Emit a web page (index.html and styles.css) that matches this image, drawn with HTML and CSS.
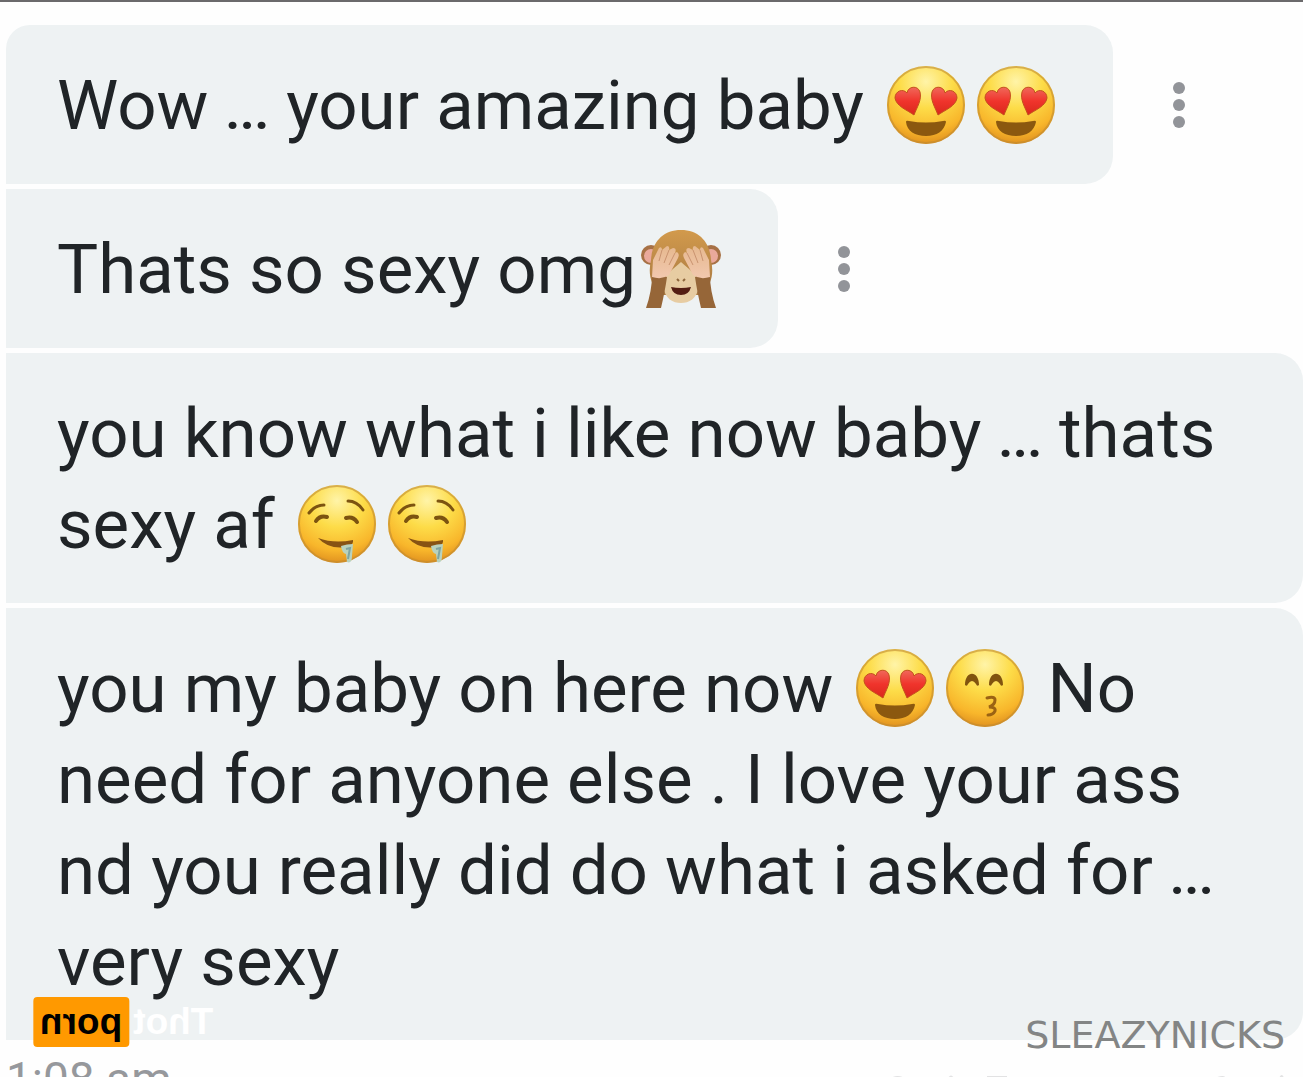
FILE: index.html
```html
<!DOCTYPE html>
<html lang="en">
  <head>
    <meta charset="UTF-8" />
    <meta name="viewport" content="width=device-width, initial-scale=1.0" />
    <title>Messages</title>
    <link rel="stylesheet" href="styles.css">
  </head>

  <body>
    <!-- shared shapes -->
    <svg class="defs" aria-hidden="true">
      <defs>
        <radialGradient id="skin" cx="0.5" cy="0.2" r="0.85">
          <stop offset="0" stop-color="#fff4a8" />
          <stop offset="0.4" stop-color="#fddc48" />
          <stop offset="0.75" stop-color="#f8b62b" />
          <stop offset="1" stop-color="#d9861c" />
        </radialGradient>
        <linearGradient id="heart" x1="0" y1="0" x2="0" y2="1">
          <stop offset="0" stop-color="#f0685a" />
          <stop offset="0.5" stop-color="#f0342c" />
          <stop offset="1" stop-color="#d9281c" />
        </linearGradient>
        <linearGradient id="fur" x1="0" y1="0" x2="0" y2="1">
          <stop offset="0" stop-color="#d29a4c" />
          <stop offset="1" stop-color="#a77842" />
        </linearGradient>
        <linearGradient id="hand" x1="0" y1="0" x2="0" y2="1">
          <stop offset="0" stop-color="#e6b88f" />
          <stop offset="1" stop-color="#f2c8ae" />
        </linearGradient>
        <symbol id="face" viewBox="0 0 80 80">
          <circle cx="40" cy="40" r="39" fill="url(#skin)" />
          <circle cx="40" cy="40" r="38" fill="none" stroke="#c08a30" stroke-opacity="0.6" stroke-width="2" />
        </symbol>
        <symbol id="love" viewBox="0 0 80 80">
          <use href="#face" />
          <g fill="url(#heart)" stroke="#c4501c" stroke-width="1">
            <path d="M28 50C21 45 10 41 9 33C9 26 17 23 21 28C22 21 32 20 34 27C36 35 31 42 28 50Z" />
            <path d="M52 50C49 42 44 35 46 27C48 20 58 21 59 28C63 23 71 26 71 33C70 41 59 45 52 50Z" />
          </g>
          <path d="M20 57Q20 55 23 56Q40 59 57 56Q60 55 60 57C58 66 51 71 40 71S21 66 20 57Z" fill="#8b580f" />
        </symbol>
        <symbol id="drool" viewBox="0 0 80 80">
          <use href="#face" />
          <g fill="none" stroke="#7c5310" stroke-linecap="round">
            <path d="M12 29Q18 21 27 21" stroke-width="3" />
            <path d="M51 17Q60 17 66 26" stroke-width="3" />
            <path d="M19 37Q23 31 30 33" stroke-width="4" />
            <path d="M49 34Q56 32 60 38" stroke-width="4" />
          </g>
          <path d="M21 54Q37 60 56 56Q57 61 50 63Q32 66 21 54Z" fill="#875313" />
          <path d="M44 62Q50 60 56 60L55 72Q55 80 50 78L49 70Q45 69 44 62Z" fill="#b9d2bd" />
          <path d="M49 65L53 64L51 75" fill="none" stroke="#7fa5a0" stroke-width="2" />
        </symbol>
        <symbol id="kiss" viewBox="0 0 80 80">
          <use href="#face" />
          <path d="M20 37C20 22 34 22 34 37Q32 39 31 36Q27 30 23 36Q22 39 20 37Z" fill="#81540f" />
          <path d="M44 37C44 22 58 22 58 37Q56 39 55 36Q51 30 47 36Q46 39 44 37Z" fill="#81540f" />
          <path d="M42 50Q50 48 50 52Q50 57 44 59Q51 59 50 63Q48 67 43 67" fill="none" stroke="#9b6313" stroke-width="3" stroke-linecap="round" />
        </symbol>
        <symbol id="monkey" viewBox="0 0 80 80">
          <circle cx="10" cy="26" r="10" fill="#a77145" />
          <circle cx="70" cy="26" r="10" fill="#a77145" />
          <circle cx="10" cy="27" r="7" fill="#eaa99b" />
          <circle cx="70" cy="27" r="7" fill="#eaa99b" />
          <path d="M40 1C58 1 69 13 70 31C73 44 71 56 60 66H20C9 56 7 44 10 31C11 13 22 1 40 1Z" fill="url(#fur)" />
          <path d="M40 33C48 40 59 48 58 57C56 70 48 74 40 74S24 70 22 57C21 48 32 40 40 33Z" fill="#e7cca2" />
          <path d="M36 50L38 52M44 50L42 52" stroke="#8d663c" stroke-width="2" />
          <path d="M30 58Q40 60 50 58Q48 66 40 66T30 58Z" fill="#541d12" />
          <path d="M11 46L26 48Q24 62 20 79H5Q11 62 11 46Z" fill="#966638" />
          <path d="M69 46L54 48Q56 62 60 79H75Q69 62 69 46Z" fill="#966638" />
          <g id="palm">
            <path d="M11 48L12 31L18 19Q21 17 21 21L26 17Q29 17 28 21L32 19Q36 19 34 24L36 23Q39 25 37 29L28 46Q21 51 11 48Z" fill="url(#hand)" />
            <path d="M21 21L18 32M28 21L23 34M34 24L28 36" stroke="#c99370" stroke-width="1" />
          </g>
          <use href="#palm" transform="matrix(-1 0 0 1 80 0)" />
        </symbol>
        <symbol id="more" viewBox="0 0 12 48">
          <circle cx="6" cy="7" r="6" />
          <circle cx="6" cy="24" r="6" />
          <circle cx="6" cy="41" r="6" />
        </symbol>
      </defs>
    </svg>

    <main class="chat">
      <div class="row">
        <p class="bubble first">Wow <span class="dots">...</span> your amazing baby <svg class="emoji" role="img" aria-label="heart eyes"><use href="#love" /></svg><svg class="emoji" role="img" aria-label="heart eyes"><use href="#love" /></svg></p>
        <button class="more" type="button" aria-label="Message options"><svg><use href="#more" /></svg></button>
      </div>
      <div class="row">
        <p class="bubble">Thats so sexy omg<svg class="emoji" role="img" aria-label="see no evil monkey"><use href="#monkey" /></svg></p>
        <button class="more" type="button" aria-label="Message options"><svg><use href="#more" /></svg></button>
      </div>
      <div class="row">
        <p class="bubble wide">you know what i like now baby <span class="dots">...</span> thats sexy af <svg class="emoji" role="img" aria-label="drooling"><use href="#drool" /></svg><svg class="emoji" role="img" aria-label="drooling"><use href="#drool" /></svg></p>
      </div>
      <div class="row">
        <p class="bubble wide">you my baby on here now <svg class="emoji" role="img" aria-label="heart eyes"><use href="#love" /></svg><svg class="emoji" role="img" aria-label="kissing"><use href="#kiss" /></svg> No need for anyone else . I love your ass nd you really did do what i asked for <span class="dots">...</span> very sexy</p>
      </div>
      <footer class="meta">
        <time>1:08 am</time>
        <svg class="specks" viewBox="0 0 420 4" aria-hidden="true">
          <path d="M8 4Q14 0 22 4ZM65 4Q68 -1 71 4ZM104 2H124V4H104ZM332 4Q341 0 343 4ZM396 4Q399 -2 401 4Z" />
        </svg>
      </footer>
    </main>

    <div class="logo">Thot<span>porn</span></div>
    <div class="credit">SLEAZYNICKS</div>
  </body>
</html>
```

FILE: styles.css
```css
* {
  box-sizing: border-box;
}
body {
  position: relative;
  height: 100vh;
  margin: 0;
  overflow: hidden;
  border-top: 2px solid #6b6a6c;
  background-color: #fefefe;
  color: #202427;
  font-family: Roboto, sans-serif;
}
.defs {
  position: absolute;
  width: 0;
  height: 0;
}
.chat {
  display: flex;
  flex-direction: column;
  gap: 5px;
  padding: 23px 0 0 6px;
}
.row {
  display: flex;
  align-items: center;
}
.bubble {
  margin: 0;
  padding: 35px 52px 33px 51px;
  border-radius: 0 28px 28px 0;
  background-color: #eef2f3;
  font-size: 69px;
  line-height: 91px;
}
.first {
  border-top-left-radius: 24px;
}
.wide {
  flex: 1;
}
.dots {
  font-size: 50px;
  font-weight: bold;
  line-height: 1;
}
.emoji {
  width: 80px;
  height: 80px;
  margin: 0 5px;
  vertical-align: -16px;
}
.more {
  width: 132px;
  height: 60px;
  padding: 0;
  border: 0;
  background: none;
  cursor: pointer;
}
.more svg {
  display: block;
  width: 12px;
  height: 48px;
  margin: 0 auto;
  fill: #929499;
}
.meta {
  display: flex;
  justify-content: space-between;
  padding-top: 4px;
  color: #96989c;
  font-size: 46px;
  line-height: 60px;
  white-space: nowrap;
}
.specks {
  width: 420px;
  height: 4px;
  margin-top: 25px;
  fill: #e2e2e3;
}
.logo {
  position: absolute;
  left: 33px;
  bottom: 30px;
  display: flex;
  align-items: center;
  gap: 4px;
  color: #fff;
  font-family: "Liberation Sans", sans-serif;
  font-size: 37px;
  font-weight: bold;
  line-height: 50px;
  transform: scaleX(-1);
}
.logo span {
  padding: 0 7px;
  border-radius: 4px;
  background-color: #ff9900;
  color: #000;
}
.credit {
  position: absolute;
  right: 18px;
  bottom: 20px;
  color: #838585;
  font-family: "DejaVu Sans", sans-serif;
  font-size: 38px;
  line-height: 44px;
}
```
